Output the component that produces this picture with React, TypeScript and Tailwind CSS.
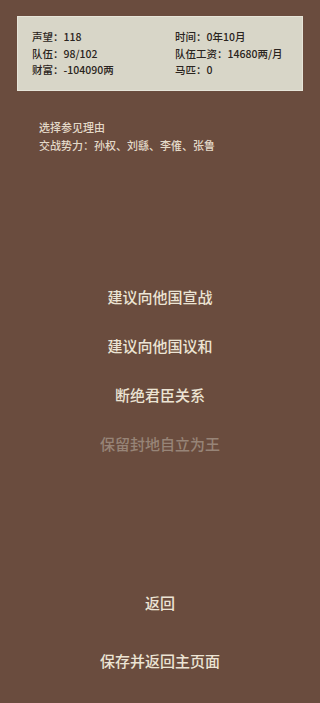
import { FC } from 'react'

const stats: [string, string][] = [
  ['声望：118', '时间：0年10月'],
  ['队伍：98/102', '队伍工资：14680两/月'],
  ['财富：-104090两', '马匹：0'],
]

const options = [
  { label: '建议向他国宣战', disabled: false },
  { label: '建议向他国议和', disabled: false },
  { label: '断绝君臣关系', disabled: false },
  { label: '保留封地自立为王', disabled: true },
]

const font = {
  fontFamily: '"Noto Sans CJK SC", "Noto Sans", sans-serif',
}

const App: FC = () => {
  return (
    <div
      className="min-h-[703px] w-[320px] bg-[#6a4c3e] pt-[16px] font-medium text-[#ece4d4]"
      style={font}
    >
      <div className="mx-[17px] h-[75px] border border-[#e6e4d8] bg-[#d8d6c8] pl-[14px] pt-[12px] text-[10.5px] leading-[16.5px] text-[#2a2420]">
        {stats.map(([left, right]) => (
          <div key={left} className="grid grid-cols-[143px_1fr]">
            <span>{left}</span>
            <span>{right}</span>
          </div>
        ))}
      </div>

      <div className="mt-[27px] pl-[39px] text-[11px] leading-[18px] text-[#e3d9c8]">
        <p>选择参见理由</p>
        <p>交战势力：孙权、刘繇、李傕、张鲁</p>
      </div>

      <div className="mt-[119px] flex flex-col">
        {options.map((o) => (
          <button
            key={o.label}
            className={`flex h-[49px] items-center justify-center text-[15px] ${
              o.disabled ? 'text-[#978477]' : 'text-[#ece4d4]'
            }`}
          >
            {o.label}
          </button>
        ))}
      </div>

      <div className="mt-[105px] flex flex-col">
        <button className="flex h-[58px] items-center justify-center text-[15px]">
          返回
        </button>
        <button className="flex h-[58px] items-center justify-center text-[15px]">
          保存并返回主页面
        </button>
      </div>
    </div>
  )
}

export default App
